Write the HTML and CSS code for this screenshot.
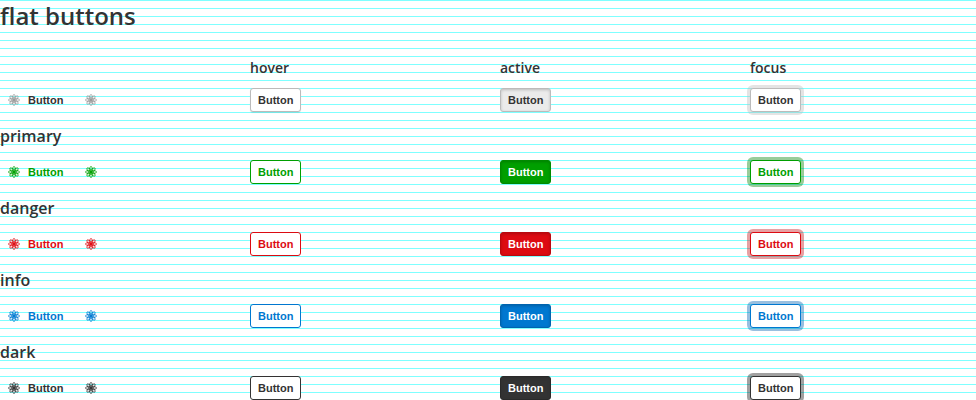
FILE: index.html
```html
<!DOCTYPE html>
<html lang="en">
<head>
<meta charset="utf-8">
<title>flat buttons</title>
<link rel="stylesheet" href="styles.css">
</head>
<body>
<svg class="defs" width="0" height="0">
  <symbol id="atom" viewBox="0 0 12 12">
    <g fill="none" stroke="currentColor" stroke-width=".75">
      <ellipse cx="6" cy="6" rx="5.6" ry="1.8"/>
      <ellipse cx="6" cy="6" rx="5.6" ry="1.8" transform="rotate(45 6 6)"/>
      <ellipse cx="6" cy="6" rx="5.6" ry="1.8" transform="rotate(90 6 6)"/>
      <ellipse cx="6" cy="6" rx="5.6" ry="1.8" transform="rotate(135 6 6)"/>
    </g>
    <circle cx="6" cy="6" r="1.2" fill="currentColor"/>
  </symbol>
</svg>
<h1>flat buttons</h1>
<div class="row states"><span></span><h3>hover</h3><h3>active</h3><h3>focus</h3></div>
<section class="default">
  <div class="row">
    <div class="group"><button class="btn"><svg class="icon"><use href="#atom"/></svg>Button</button><button class="btn"><svg class="icon"><use href="#atom"/></svg></button></div>
    <div><button class="btn hover">Button</button></div><div><button class="btn active">Button</button></div><div><button class="btn focus">Button</button></div>
  </div>
</section>
<section class="primary">
  <h2>primary</h2>
  <div class="row">
    <div class="group"><button class="btn"><svg class="icon"><use href="#atom"/></svg>Button</button><button class="btn"><svg class="icon"><use href="#atom"/></svg></button></div>
    <div><button class="btn hover">Button</button></div><div><button class="btn active">Button</button></div><div><button class="btn focus">Button</button></div>
  </div>
</section>
<section class="danger">
  <h2>danger</h2>
  <div class="row">
    <div class="group"><button class="btn"><svg class="icon"><use href="#atom"/></svg>Button</button><button class="btn"><svg class="icon"><use href="#atom"/></svg></button></div>
    <div><button class="btn hover">Button</button></div><div><button class="btn active">Button</button></div><div><button class="btn focus">Button</button></div>
  </div>
</section>
<section class="info">
  <h2>info</h2>
  <div class="row">
    <div class="group"><button class="btn"><svg class="icon"><use href="#atom"/></svg>Button</button><button class="btn"><svg class="icon"><use href="#atom"/></svg></button></div>
    <div><button class="btn hover">Button</button></div><div><button class="btn active">Button</button></div><div><button class="btn focus">Button</button></div>
  </div>
</section>
<section class="dark">
  <h2>dark</h2>
  <div class="row">
    <div class="group"><button class="btn"><svg class="icon"><use href="#atom"/></svg>Button</button><button class="btn"><svg class="icon"><use href="#atom"/></svg></button></div>
    <div><button class="btn hover">Button</button></div><div><button class="btn active">Button</button></div><div><button class="btn focus">Button</button></div>
  </div>
</section>
</body>
</html>
```
FILE: styles.css
```css
* { box-sizing: border-box; }
html { overflow: hidden; }
body {
  margin: 0;
  height: 400px;
  overflow: hidden;
  color: #333;
  font-family: "Open Sans", sans-serif;
  background: repeating-linear-gradient(to bottom, #7fffff 0, #7fffff 1px, #fff 1px, #fff 8px);
}
.defs { display: block; }
h1, h2, h3 { margin: 0; font-weight: 600; }
h1 { font-size: 24px; line-height: 32px; }
h2 { font-size: 16px; line-height: 24px; padding: 12px 0; }
h3 { font-size: 14px; line-height: 24px; }
.row { display: grid; grid-template-columns: 250px 250px 250px 1fr; height: 24px; }
.states { margin: 24px 0 8px; }
.group { display: flex; gap: 6px; }
.btn {
  display: flex;
  align-items: center;
  gap: 8px;
  height: 24px;
  margin: 0;
  padding: 0 7px;
  border: 1px solid transparent;
  border-radius: 3px;
  background: transparent;
  color: var(--text);
  font: bold 11px/22px "Liberation Sans", Arial, sans-serif;
}
.icon { display: block; width: 12px; height: 12px; color: var(--icon); }
.hover, .focus { background: #fff; border-color: var(--line); }
.focus { box-shadow: 0 0 0 3px var(--ring); }
.active {
  background: var(--fill);
  border-color: var(--edge);
  color: var(--active-text);
  box-shadow: inset 0 1px 3px var(--inner);
}
.default { --text: #333; --icon: #999; --line: #bbb; --ring: rgba(187,187,187,.4); --fill: #ebebeb; --edge: #bbb; --active-text: #333; --inner: rgba(0,0,0,.2); }
.default .hover { box-shadow: 0 1px 1px rgba(0,0,0,.1); }
.primary { --text: #009f00; --icon: #009f00; --line: #009f00; --ring: rgba(0,128,0,.4); --fill: #009f00; --edge: #008a00; --active-text: #fff; --inner: rgba(0,0,0,.2); }
.danger { --text: #dd0b12; --icon: #dd0b12; --line: #dd0b12; --ring: rgba(195,20,25,.4); --fill: #dd0b12; --edge: #b9090f; --active-text: #fff; --inner: rgba(0,0,0,.2); }
.info { --text: #0078d0; --icon: #0078d0; --line: #0078d0; --ring: rgba(0,95,175,.4); --fill: #0078d0; --edge: #0064ae; --active-text: #fff; --inner: rgba(0,0,0,.2); }
.dark { --text: #333; --icon: #333; --line: #333; --ring: rgba(30,30,30,.42); --fill: #333; --edge: #2a2a2a; --active-text: #fff; --inner: rgba(0,0,0,.1); }
```
